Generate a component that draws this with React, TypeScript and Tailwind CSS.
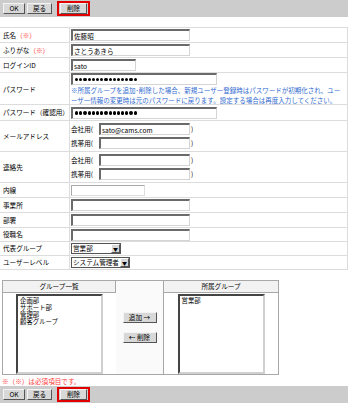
import React from "react";

const font = "font-['Noto_Sans_CJK_JP','Noto_Sans_CJK_SC',sans-serif]";

function Btn({ children, w }: { children: React.ReactNode; w: string }) {
  return (
    <button
      className={`${w} h-[11px] flex items-center justify-center bg-[#d8d8d8] border border-t-[#f4f4f4] border-l-[#f4f4f4] border-r-[#555] border-b-[#555] text-[6.6px] leading-none text-black`}
    >
      {children}
    </button>
  );
}

function Toolbar() {
  return (
    <div className="h-[17px] w-[348px] bg-[#cccccc] flex items-center pl-[3px]">
      <Btn w="w-[22px]">OK</Btn>
      <div className="ml-[2px]">
        <Btn w="w-[25px]">戻る</Btn>
      </div>
      <div className="ml-[5px] border-2 border-[#e00000] px-[1px] flex">
        <Btn w="w-[27px]">削除</Btn>
      </div>
    </div>
  );
}

function Input({ w, value }: { w: string; value?: string }) {
  return (
    <input
      readOnly
      type="text"
      defaultValue={value ?? ""}
      className={`${w} h-[12px] bg-white border-t-2 border-l-2 border-t-[#6a6a6a] border-l-[#6a6a6a] border-r border-b border-r-[#d4d4d4] border-b-[#d4d4d4] px-[1px] text-[6.6px] leading-none text-black outline-none`}
    />
  );
}

function Password() {
  return (
    <div className="w-[146px] h-[12px] flex items-center bg-white border-t-2 border-l-2 border-t-[#6a6a6a] border-l-[#6a6a6a] border-r border-b border-r-[#d4d4d4] border-b-[#d4d4d4] pl-[2px] gap-[1px]">
      {Array.from({ length: 15 }).map((_, i) => (
        <span key={i} className="w-[3.2px] h-[3.2px] rounded-full bg-black" />
      ))}
    </div>
  );
}

function Select({ w, value }: { w: string; value: string }) {
  return (
    <div
      className={`${w} h-[11px] flex items-center bg-white border border-[#555] text-[6.6px] leading-none whitespace-nowrap overflow-hidden`}
    >
      <span className="flex-1 pl-[1px]">{value}</span>
      <span className="shrink-0 w-[9px] h-[9px] bg-[#d8d8d8] border border-t-white border-l-white border-r-[#555] border-b-[#555] flex items-center justify-center text-[5px] leading-none">
        ▼
      </span>
    </div>
  );
}

function Req() {
  return <span className="text-[#ff3b3b]">（※）</span>;
}

function Row({ label, h, children }: { label: React.ReactNode; h: string; children?: React.ReactNode }) {
  return (
    <div className={`grid grid-cols-[70px_1fr] ${h} border-b border-[#dcdcdc]`}>
      <div className="flex items-center pl-[3px] border-r border-[#dcdcdc] whitespace-nowrap">{label}</div>
      <div className="flex items-center pl-[1px]">{children}</div>
    </div>
  );
}

function Pair({ label, value }: { label: string; value?: string }) {
  return (
    <div className="flex items-center">
      <span className="w-[28px]">{label}</span>
      <Input w="w-[91px]" value={value} />
      <span className="ml-[1px]">)</span>
    </div>
  );
}

function ListBox({ items }: { items: string[] }) {
  return (
    <div className="w-[87px] h-[80px] bg-white border-t-2 border-l-2 border-t-[#444] border-l-[#444] border-r-2 border-b-2 border-r-[#d0d0d0] border-b-[#d0d0d0] pl-[2px] pt-[1px] text-[6.4px] leading-[7px]">
      {items.map((it) => (
        <div key={it} className="h-[7px]">{it}</div>
      ))}
    </div>
  );
}

export default function App() {
  return (
    <div className={`w-[350px] h-[405px] bg-white text-black text-[6.6px] leading-none ${font}`}>
      <Toolbar />

      <div className="mt-[10px] w-[348px] border-t border-r border-[#dcdcdc]">
        <Row label={<span>氏名<Req /></span>} h="h-[15px]">
          <Input w="w-[119px]" value="佐藤昭" />
        </Row>
        <Row label={<span>ふりがな<Req /></span>} h="h-[15px]">
          <Input w="w-[119px]" value="さとうあきら" />
        </Row>
        <Row label="ログインID" h="h-[15px]">
          <Input w="w-[65px]" value="sato" />
        </Row>
        <Row label="パスワード" h="h-[32px]">
          <div className="flex flex-col">
            <Password />
            <div className="text-[#2f6ad0] text-[6.5px] leading-[10px] whitespace-nowrap">
              ※所属グループを追加･削除した場合、新規ユーザー登録時はパスワードが初期化され、ユー
              <br />
              ーザー情報の変更時は元のパスワードに戻ります。設定する場合は再度入力してください。
            </div>
          </div>
        </Row>
        <Row label="パスワード（確認用）" h="h-[16px]">
          <Password />
        </Row>
        <Row label="メールアドレス" h="h-[31px]">
          <div className="flex flex-col gap-[2px]">
            <Pair label="会社用(" value="sato@cams.com" />
            <Pair label="携帯用(" />
          </div>
        </Row>
        <Row label="連絡先" h="h-[31px]">
          <div className="flex flex-col gap-[2px]">
            <Pair label="会社用(" />
            <Pair label="携帯用(" />
          </div>
        </Row>
        <Row label="内線" h="h-[15px]">
          <input
            readOnly
            className="w-[74px] h-[11px] bg-white border border-[#aaa] border-b-[#ddd] border-r-[#ddd] outline-none"
          />
        </Row>
        <Row label="事業所" h="h-[15px]">
          <Input w="w-[119px]" />
        </Row>
        <Row label="部署" h="h-[15px]">
          <Input w="w-[119px]" />
        </Row>
        <Row label="役職名" h="h-[14px]">
          <Input w="w-[119px]" />
        </Row>
        <Row label="代表グループ" h="h-[14px]">
          <Select w="w-[50px]" value="営業部" />
        </Row>
        <Row label="ユーザーレベル" h="h-[14px]">
          <Select w="w-[59px]" value="システム管理者" />
        </Row>
      </div>

      <div className="ml-[2px] mt-[10px] w-[277px] grid grid-cols-[113px_48px_1fr] grid-rows-[12px_81px] border border-[#a8a8a8]">
        <div className="bg-[#f2f2f2] border-r border-b border-[#a8a8a8] flex items-center justify-center">
          グループ一覧
        </div>
        <div className="row-span-2 border-r border-[#a8a8a8] flex flex-col items-center justify-center gap-[9px] bg-[#fafafa]">
          <Btn w="w-[34px]">追加 →</Btn>
          <Btn w="w-[34px]">← 削除</Btn>
        </div>
        <div className="bg-[#f2f2f2] border-b border-[#a8a8a8] flex items-center justify-center">
          所属グループ
        </div>
        <div className="flex justify-center pt-[1px]">
          <ListBox items={["企画部", "サポート部", "管理部", "顧客グループ"]} />
        </div>
        <div className="flex justify-center pt-[1px]">
          <ListBox items={["営業部"]} />
        </div>
      </div>

      <div className="mt-[2px] pl-[2px] text-[#ff3b3b] h-[8px] leading-[8px]">※（※）は必須項目です。</div>

      <div className="mt-[1px]">
        <Toolbar />
      </div>
    </div>
  );
}
